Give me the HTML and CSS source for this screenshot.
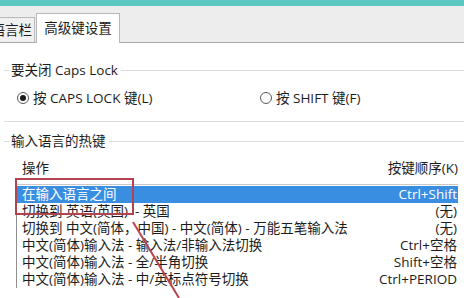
FILE: index.html
```html
<!DOCTYPE html>
<html lang="zh-CN">
<head>
<meta charset="utf-8">
<link rel="stylesheet" href="styles.css">
</head>
<body>
<div class="topbar"></div>
<div class="tabstrip">
  <div class="tab tab-partial"><span>语言栏</span></div>
  <div class="tab tab-active">高级键设置</div>
</div>
<div class="content">
  <div class="group-head g1"><span class="lead"></span><span class="glabel">要关闭 Caps Lock</span><span class="gline"></span></div>
  <div class="radios">
    <label class="radio r1"><span class="dot checked"></span>按 CAPS LOCK 键(L)</label>
    <label class="radio r2"><span class="dot"></span>按 SHIFT 键(F)</label>
  </div>
  <div class="group-end"></div>
  <div class="group-head g2"><span class="lead"></span><span class="glabel">输入语言的热键</span><span class="gline"></span></div>
  <div class="cols">
    <span>操作</span>
    <span>按键顺序(K)</span>
  </div>
  <div class="list">
    <div class="row selected"><span>在输入语言之间</span><span>Ctrl+Shift</span></div>
    <div class="row"><span>切换到 英语(英国)&nbsp;&nbsp;- 英国</span><span>(无)</span></div>
    <div class="row"><span>切换到 中文(简体，中国) - 中文(简体) - 万能五笔输入法</span><span>(无)</span></div>
    <div class="row"><span>中文(简体)输入法 - 输入法/非输入法切换</span><span>Ctrl+空格</span></div>
    <div class="row"><span>中文(简体)输入法 - 全/半角切换</span><span>Shift+空格</span></div>
    <div class="row"><span>中文(简体)输入法 - 中/英标点符号切换</span><span>Ctrl+PERIOD</span></div>
  </div>
</div>
<div class="redbox"></div>
<svg class="arrow" width="464" height="298" viewBox="0 0 464 298">
  <line x1="133" y1="222" x2="179" y2="298" stroke="#c0424c" stroke-width="2"/>
</svg>
</body>
</html>
```
FILE: styles.css
```css
html, body {
  margin: 0;
  padding: 0;
  width: 464px;
  height: 298px;
  overflow: hidden;
  background: #ffffff;
  font-family: "Open Sans", "Noto Sans CJK SC", sans-serif;
  font-size: 13.5px;
  color: #1c1c1c;
  position: relative;
}
.topbar {
  height: 6px;
  background: #5cc7bf;
}
.tabstrip {
  height: 36px;
  background: #ededed;
  border-bottom: 1px solid #a8a8a8;
  display: flex;
  align-items: flex-end;
  gap: 1px;
}
.tab {
  box-sizing: border-box;
  border: 1px solid #b9b9b9;
  border-bottom: none;
  display: flex;
  align-items: center;
  line-height: 16px;
}
.tab-partial {
  width: 35px;
  height: 25px;
  background: #f0f0f0;
  overflow: hidden;
  justify-content: flex-end;
  padding-right: 2px;
  border-left: none;
}
.tab-partial span { white-space: nowrap; }
.tab-active {
  width: 84px;
  height: 30px;
  background: #ffffff;
  justify-content: center;
  margin-bottom: -1px;
  padding-bottom: 1px;
}
.content {
  padding-left: 4px;
}
.group-head {
  display: flex;
  align-items: center;
  height: 16px;
  line-height: 16px;
}
.g1 { margin-top: 19px; }
.g2 { margin-top: 11px; }
.lead {
  width: 6px;
  height: 1px;
  background: #dddddd;
}
.glabel {
  padding: 0 3px 0 1px;
  white-space: nowrap;
}
.gline {
  flex: 1;
  height: 1px;
  background: #dcdcdc;
}
.radios {
  margin-top: 12px;
  height: 16px;
  display: flex;
  line-height: 16px;
}
.radio {
  display: flex;
  align-items: center;
  gap: 4px;
  white-space: nowrap;
}
.r1 { margin-left: 13px; width: 243px; flex: none; }
.dot {
  box-sizing: border-box;
  width: 12px;
  height: 12px;
  border-radius: 50%;
  border: 1px solid #5a5a5a;
  background: #fff;
  position: relative;
  flex: none;
}
.dot.checked::after {
  content: "";
  position: absolute;
  left: 2px;
  top: 2px;
  width: 6px;
  height: 6px;
  border-radius: 50%;
  background: #1a1a1a;
}
.group-end {
  margin-top: 15px;
  height: 1px;
  background: #dddddd;
}
.cols {
  margin-top: 11px;
  height: 16px;
  line-height: 16px;
  display: flex;
  justify-content: space-between;
  padding-left: 18px;
  padding-right: 6px;
}
.list {
  margin-top: 8px;
  margin-left: 12px;
  border-left: 1px solid #8e8e8e;
  border-top: 1px solid #c8c8c8;
  padding-top: 1px;
  margin-right: 6px;
}
.row {
  height: 17px;
  line-height: 17px;
  display: flex;
  justify-content: space-between;
  padding-left: 5px;
  padding-right: 1px;
  white-space: nowrap;
}
.row.selected {
  background: #3a8ee2;
  color: #ffffff;
}
.redbox {
  position: absolute;
  left: 15px;
  top: 178px;
  width: 115px;
  height: 33px;
  border: 2px solid #b3434e;
}
.arrow {
  position: absolute;
  left: 0;
  top: 0;
}
```
